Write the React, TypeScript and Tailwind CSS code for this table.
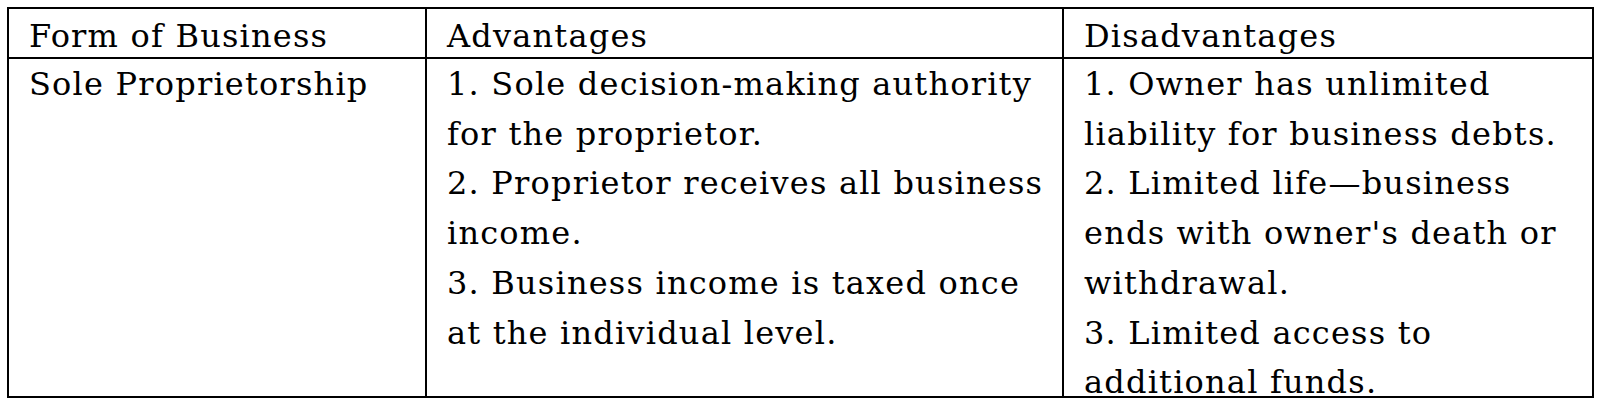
const header = ["Form of Business", "Advantages", "Disadvantages"];

const soleLines = ["Sole Proprietorship"];

const advantageLines = [
  "1. Sole decision-making authority",
  "for the proprietor.",
  "2. Proprietor receives all business",
  "income.",
  "3. Business income is taxed once",
  "at the individual level.",
];

const disadvantageLines = [
  "1. Owner has unlimited",
  "liability for business debts.",
  "2. Limited life\u2014business",
  "ends with owner's death or",
  "withdrawal.",
  "3. Limited access to",
  "additional funds.",
];

function Lines({ lines }: { lines: string[] }) {
  return (
    <div className="mt-[1px]">
      {lines.map((line, i) => (
        <div key={i} className="whitespace-nowrap">
          {line}
        </div>
      ))}
    </div>
  );
}

export default function App() {
  return (
    <div
      className="bg-white pl-[7px] pt-[7px] h-[404px] overflow-hidden text-[32px] leading-[49.7px] tracking-[1.2px] text-black"
      style={{ fontFamily: '"DejaVu Serif", "Liberation Serif", serif' }}
    >
      <div className="w-[1587px] h-[391px] border-2 border-black">
        <div className="grid grid-cols-[416px_637px_530px] h-[50px] border-b-2 border-black">
          <div className="pl-[20px] pt-[3px]">{header[0]}</div>
          <div className="border-l-2 border-black pl-[20px] pt-[3px]">{header[1]}</div>
          <div className="border-l-2 border-black pl-[20px] pt-[3px]">{header[2]}</div>
        </div>
        <div className="grid grid-cols-[416px_637px_530px] grid-rows-[337px] h-[337px]">
          <div className="pl-[20px]">
            <Lines lines={soleLines} />
          </div>
          <div className="border-l-2 border-black pl-[20px]">
            <Lines lines={advantageLines} />
          </div>
          <div className="border-l-2 border-black pl-[20px]">
            <Lines lines={disadvantageLines} />
          </div>
        </div>
      </div>
    </div>
  );
}
